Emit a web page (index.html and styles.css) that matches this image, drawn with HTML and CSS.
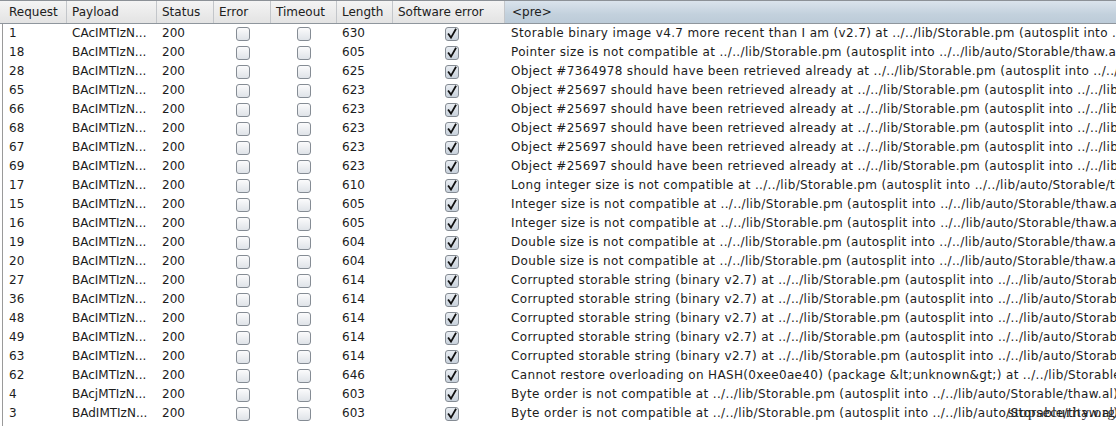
FILE: index.html
```html
<!DOCTYPE html>
<html>
<head>
<meta charset="utf-8">
<link rel="stylesheet" href="styles.css">
</head>
<body>
<div class="table">
  <div class="head">
    <div class="hc c-req">Request</div>
    <div class="hc">Payload</div>
    <div class="hc">Status</div>
    <div class="hc">Error</div>
    <div class="hc">Timeout</div>
    <div class="hc">Length</div>
    <div class="hc">Software error</div>
    <div class="hc sorted">&lt;pre&gt;</div>
  </div>
  <div class="body" id="rows"></div>
  <div class="mark">stopsecurity.org</div>
</div>
<script src="app.js"></script>
</body>
</html>
```

FILE: app.js
```js
const L = "../../lib/Storable.pm (autosplit into ../../lib/auto/Storable/thaw.al)";
const rows = [
  ["1","CAcIMTIzN...","630","Storable binary image v4.7 more recent than I am (v2.7) at " + L],
  ["18","BAcIMTIzN...","605","Pointer size is not compatible at " + L],
  ["28","BAcIMTIzN...","625","Object #7364978 should have been retrieved already at " + L],
  ["65","BAcIMTIzN...","623","Object #25697 should have been retrieved already at " + L],
  ["66","BAcIMTIzN...","623","Object #25697 should have been retrieved already at " + L],
  ["68","BAcIMTIzN...","623","Object #25697 should have been retrieved already at " + L],
  ["67","BAcIMTIzN...","623","Object #25697 should have been retrieved already at " + L],
  ["69","BAcIMTIzN...","623","Object #25697 should have been retrieved already at " + L],
  ["17","BAcIMTIzN...","610","Long integer size is not compatible at " + L],
  ["15","BAcIMTIzN...","605","Integer size is not compatible at " + L],
  ["16","BAcIMTIzN...","605","Integer size is not compatible at " + L],
  ["19","BAcIMTIzN...","604","Double size is not compatible at " + L],
  ["20","BAcIMTIzN...","604","Double size is not compatible at " + L],
  ["27","BAcIMTIzN...","614","Corrupted storable string (binary v2.7) at " + L],
  ["36","BAcIMTIzN...","614","Corrupted storable string (binary v2.7) at " + L],
  ["48","BAcIMTIzN...","614","Corrupted storable string (binary v2.7) at " + L],
  ["49","BAcIMTIzN...","614","Corrupted storable string (binary v2.7) at " + L],
  ["63","BAcIMTIzN...","614","Corrupted storable string (binary v2.7) at " + L],
  ["62","BAcIMTIzN...","646","Cannot restore overloading on HASH(0xee0ae40) (package &lt;unknown&gt;) at " + L],
  ["4","BAcjMTIzN...","603","Byte order is not compatible at " + L],
  ["3","BAdIMTIzN...","603","Byte order is not compatible at " + L],
  ["2","BAdjMTIzN...","603","Byte order is not compatible at " + L]
];
const box = '<span class="cb"></span>';
const chk = '<span class="cb on"><svg viewBox="0 0 14 14" width="14" height="14"><path d="M3.6 7.2 L6 10.6 L10.6 2.6" fill="none" stroke="#111" stroke-width="1.8" stroke-linecap="square"/></svg></span>';
const host = document.getElementById("rows");
for (const r of rows) {
  const row = document.createElement("div");
  row.className = "row";
  const cells = [
    ["c c-req", r[0]], ["c", r[1]], ["c", "200"],
    ["c cc", box], ["c cc", box], ["c", r[2]], ["c cc sw", chk], ["c msg", null]
  ];
  for (const [cls, html] of cells) {
    const d = document.createElement("div");
    d.className = cls;
    if (html === null) d.textContent = r[3]; else d.innerHTML = html;
    row.appendChild(d);
  }
  host.appendChild(row);
}
```

FILE: styles.css
```css
html, body {
  margin: 0;
  padding: 0;
  background: #ffffff;
  overflow: hidden;
}
body {
  width: 1116px;
  height: 426px;
  font-family: "DejaVu Sans", sans-serif;
  font-size: 12px;
  color: #1c1c1c;
}
.table {
  position: relative;
  width: 1116px;
  height: 426px;
  overflow: hidden;
}
.head, .row {
  display: grid;
}
.head {
  grid-template-columns: 67px 90px 57px 57px 66px 56px 112px 1fr;
  height: 22px;
  border-top: 1px solid #8c9197;
  border-bottom: 1px solid #8f969d;
  background: linear-gradient(#f4f4f4, #e3e3e3);
}
.row {
  grid-template-columns: 64px 90px 57px 57px 66px 56px 112px 1fr;
  height: 19px;
}
.hc {
  line-height: 22px;
  padding-left: 5px;
  border-right: 1px solid #c3c6ca;
  white-space: nowrap;
  overflow: hidden;
  color: #202020;
}
.hc.c-req { padding-left: 9px; }
.hc.sorted {
  border-right: none;
  background: linear-gradient(#dae3ec, #c3d1dd 60%, #bccbd8);
  padding-left: 7px;
}
.body {
  border-left: 1px solid #9a9a9a;
  margin-left: 2px;
}
.c {
  line-height: 19px;
  padding-left: 5px;
  white-space: nowrap;
  overflow: hidden;
}
.row .c-req { padding-left: 6px; }
.cc {
  display: flex;
  align-items: center;
  justify-content: center;
  padding-left: 0;
}
.sw { padding-left: 6px; }
.msg {
  padding-left: 6px;
  letter-spacing: 0.35px;
}
.cb {
  box-sizing: border-box;
  width: 14px;
  height: 14px;
  border: 1px solid #858c94;
  border-radius: 3px;
  background: linear-gradient(#fbfbfc, #dfe3e8);
  display: block;
  position: relative;
}
.cb.on {
  background: linear-gradient(#e9edf2, #c9d2dc);
}
.cb svg {
  position: absolute;
  left: -1px;
  top: -1px;
}
.mark {
  position: absolute;
  left: 1008px;
  top: 404px;
  font-family: "Liberation Serif", serif;
  font-size: 15px;
  letter-spacing: 0.8px;
  color: #222;
}
```
